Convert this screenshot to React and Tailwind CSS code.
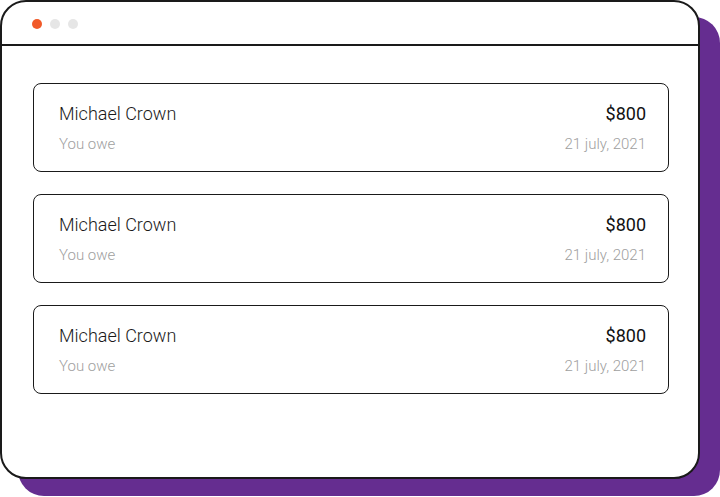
import React from 'react';

const rows = [
  { name: 'Michael Crown', note: 'You owe', amount: '$800', date: '21 july, 2021' },
  { name: 'Michael Crown', note: 'You owe', amount: '$800', date: '21 july, 2021' },
  { name: 'Michael Crown', note: 'You owe', amount: '$800', date: '21 july, 2021' },
];

export default function App() {
  return (
    <div className="w-[720px] h-[497px] bg-white relative overflow-hidden font-['Roboto',sans-serif]">
      {/* Purple backdrop */}
      <div className="absolute left-[18px] top-[17px] w-[702px] h-[479px] rounded-[26px] bg-[#652d90]" />

      {/* Window */}
      <div className="relative w-[700px] h-[479px] bg-white border-2 border-[#1a1a1a] rounded-[26px] flex flex-col">
        <div className="h-[44px] border-b-2 border-[#1a1a1a] flex items-center gap-2 pl-[30px] pt-px">
          <span className="w-[10px] h-[10px] rounded-full bg-[#f15a29]" />
          <span className="w-[10px] h-[10px] rounded-full bg-[#e6e6e6]" />
          <span className="w-[10px] h-[10px] rounded-full bg-[#e6e6e6]" />
        </div>

        <div className="flex flex-col gap-[22px] pl-[31px] pr-[29px] pt-[37px]">
          {rows.map((r, i) => (
            <div
              key={i}
              className="h-[89px] border-[1.5px] border-[#1a1a1a] rounded-[8px] flex items-center justify-between pl-[25px] pr-[22px]"
            >
              <div className="flex flex-col gap-[10px]">
                <span className="text-[18px] leading-[22px] font-light text-[#1a1a1a]">{r.name}</span>
                <span className="text-[15px] leading-[18px] font-light text-[#a0a0a0]">{r.note}</span>
              </div>
              <div className="flex flex-col items-end gap-[10px]">
                <span className="text-[18px] leading-[22px] font-normal text-[#111]">{r.amount}</span>
                <span className="text-[15px] leading-[18px] font-light text-[#a0a0a0]">{r.date}</span>
              </div>
            </div>
          ))}
        </div>
      </div>
    </div>
  );
}
